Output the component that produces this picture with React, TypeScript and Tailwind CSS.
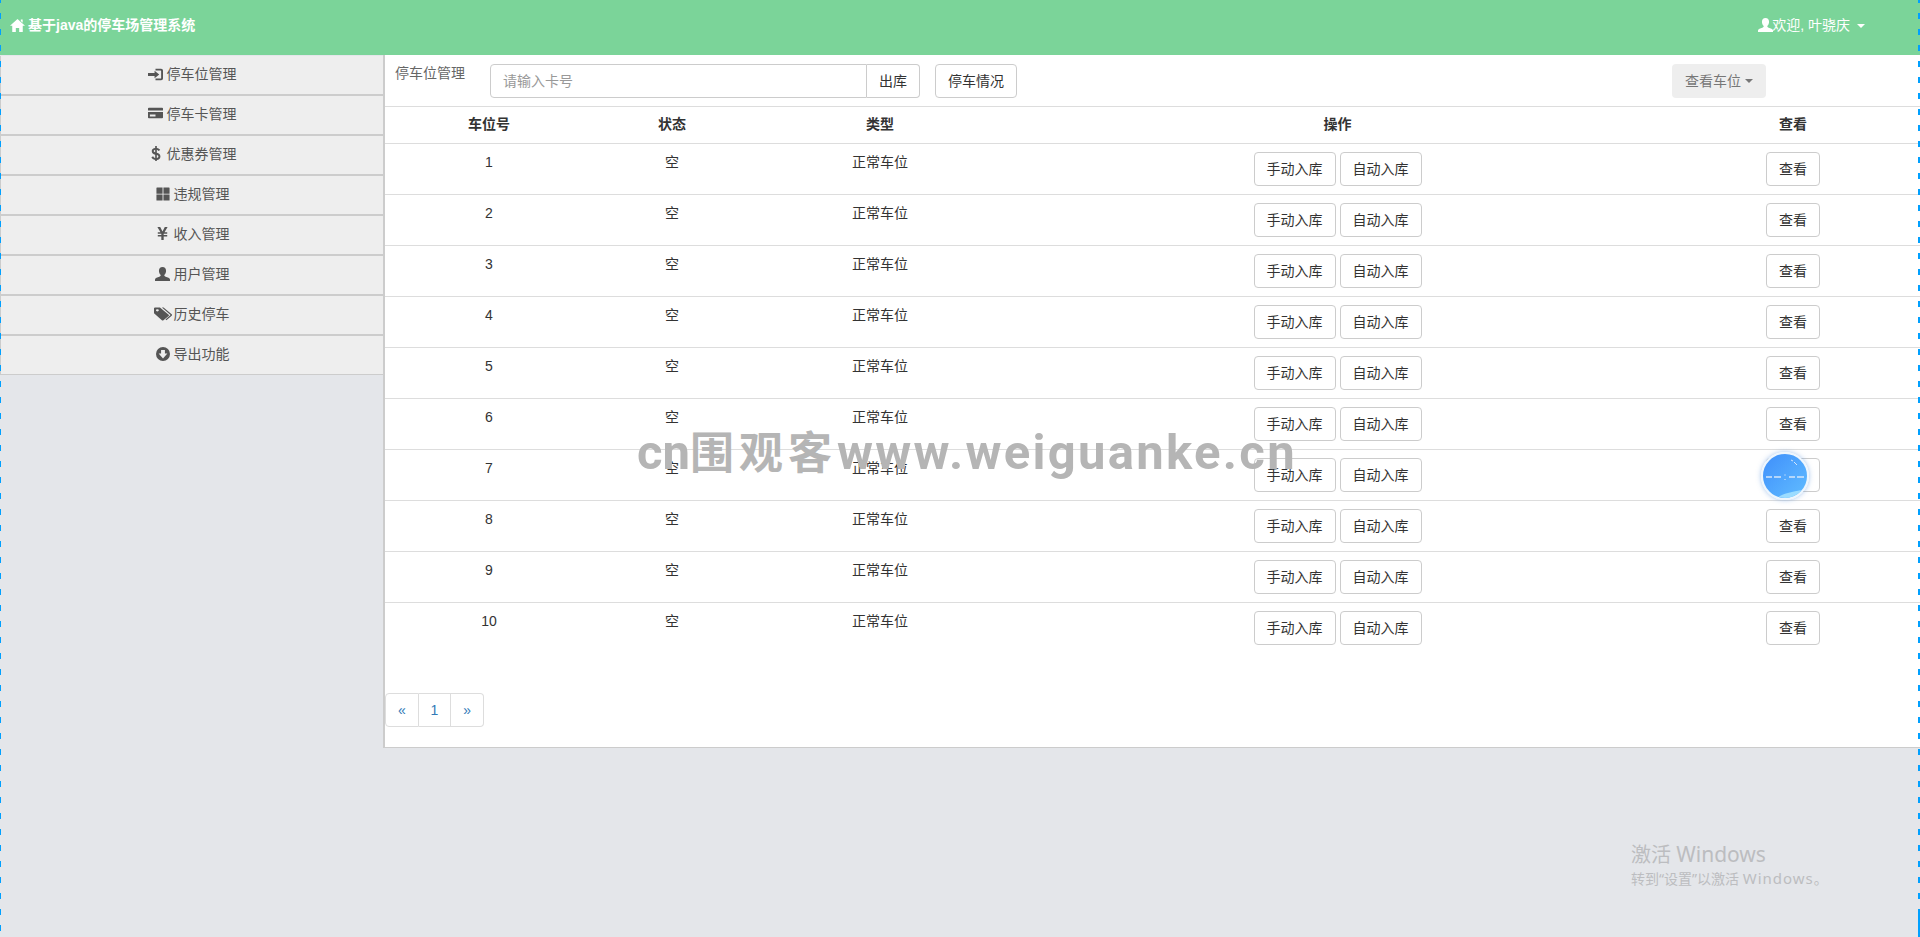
const font = '[font-family:"Liberation_Sans","Noto_Sans_CJK_SC",sans-serif]';

type P = { className?: string };
const I = ({ className, d, box = '0 0 16 16' }: P & { d: string; box?: string }) => (
  <svg viewBox={box} preserveAspectRatio="none" className={`${className} shrink-0`} fill="currentColor" fillRule="evenodd"><path d={d} /></svg>
);
const Home = (p: P) => <I {...p} d="M8 1 16 8.200h-2.400V15H9.800v-4.400H6.200V15H2.400V8.200H0L8 1ZM11.500 1.500h2v3.500l-2-1.800V1.500Z" />;
const LogIn = (p: P) => <I {...p} d="M8 1h6a2 2 0 0 1 2 2v10a2 2 0 0 1-2 2H8v-2h5.300a.7.7 0 0 0 .7-.7V3.700a.7.7 0 0 0-.7-.7H8V1ZM7 3.500 12 8l-5 4.500V9.800H0V6.200h7V3.500Z" />;
const Card = (p: P) => <I {...p} d="M1 1h14a1 1 0 0 1 1 1v2.500H0V2a1 1 0 0 1 1-1ZM0 6.500h16V14a1 1 0 0 1-1 1H1a1 1 0 0 1-1-1V6.500Zm2 3.500v2.500h6V10H2Z" />;
const Usd = (p: P) => <I {...p} box="2 0 12 16" d="M7 0h2v2c2 .2 3.400 1 4 2.200l-2 1.200C10.500 4.600 9.800 4.200 9 4v3.200c2.500.6 4.300 1.500 4.300 3.900 0 2.200-1.800 3.500-4.300 3.700V16H7v-1.200c-2.300-.2-3.800-1.200-4.500-2.800l2.100-1.100c.5 1 1.300 1.600 2.400 1.800V9.200C4.600 8.600 2.900 7.700 2.900 5.300 2.900 3.300 4.600 2.100 7 2V0Zm0 4c-1 .1-1.700.6-1.700 1.300 0 .7.600 1 1.700 1.300V4Zm2 5.600v3.100c1.100-.1 1.900-.6 1.900-1.500 0-.8-.7-1.200-1.900-1.600Z" />;
const Th = (p: P) => <I {...p} d="M1 .5h6.300a.4.4 0 0 1 .2.200v7H.500V1a.5.5 0 0 1 .5-.5Zm7.500 0H15a.5.5 0 0 1 .5.500v6.700h-7V.5ZM.5 8.700h7v6.800H1a.5.5 0 0 1-.5-.5V8.700Zm8 0h7V15a.5.5 0 0 1-.5.500H8.500V8.700Z" />;
const Yen = (p: P) => <I {...p} box="1 0 14 16" d="M1.500 0h3.600L8 5.600 10.900 0h3.600l-3.900 6.500H14v1.800H9.500v1.500H14v1.800H9.500V16h-3v-4.400H2V9.800h4.500V8.300H2V6.500h3.400L1.500 0Z" />;
const User = (p: P) => <I {...p} d="M8 0c2.400 0 3.800 1.800 3.800 4.200 0 2-.8 4-1.900 4.900 0 1 .3 1.400 1.400 1.900 2 .8 4.700 1.500 4.700 3.200V16H0v-1.800c0-1.700 2.700-2.400 4.700-3.200 1.100-.5 1.400-.9 1.400-1.900C5 8.200 4.200 6.200 4.200 4.200 4.200 1.800 5.600 0 8 0Z" />;
const Tags = (p: P) => <I {...p} d="M0 1.500A1 1 0 0 1 1 .5h4.300L13 8.800a1 1 0 0 1 0 1.400l-4.600 5a1 1 0 0 1-1.400 0L0 7V1.500Zm3 1a1.300 1.300 0 1 0 0 2.600 1.300 1.300 0 0 0 0-2.600ZM7 .5h1.500l7.200 7.700a1.200 1.200 0 0 1 0 1.700L11 15l-.8-.8 4.300-4.700a.5.500 0 0 0 0-.7L7 .5Z" />;
const Down = (p: P) => <I {...p} d="M8 0a8 8 0 1 1 0 16A8 8 0 0 1 8 0ZM5.800 3.500v4H3L8 13l5-5.500h-2.800v-4H5.800Z" />;

const menu = [
  { Icon: LogIn, label: '停车位管理', cls: 'w-[15px] h-[13px]' },
  { Icon: Card, label: '停车卡管理', cls: 'w-[15px] h-[12px] mb-[3px]' },
  { Icon: Usd, label: '优惠券管理', cls: 'w-[10px] h-[15px] mb-[2px]' },
  { Icon: Th, label: '违规管理', cls: 'w-[14px] h-[14px]' },
  { Icon: Yen, label: '收入管理', cls: 'w-[11px] h-[13px] mb-[2px]' },
  { Icon: User, label: '用户管理', cls: 'w-[15px] h-[14px]' },
  { Icon: Tags, label: '历史停车', cls: 'w-[18px] h-[14px]' },
  { Icon: Down, label: '导出功能', cls: 'w-[14px] h-[14px]' },
];

const btn = 'inline-flex items-center justify-center h-[34px] px-[12px] border border-[#ccc] rounded-[4px] bg-white text-[14px] text-[#333]';

export default function App() {
  return (
    <div className={`${font} relative h-[937px] overflow-hidden bg-[#e4e6ea] text-[14px] text-[#333]`}>
      <header className="flex items-center justify-between h-[55px] pb-[5px] bg-[#7bd499] text-white pl-[10px] pr-[55px]">
        <div className="flex items-center gap-[3px] font-bold">
          <Home className="w-[15px] h-[15px]" />
          <span>基于java的停车场管理系统</span>
        </div>
        <div className="flex items-center">
          <User className="w-[15px] h-[14px] mr-[-1px]" />
          <span>欢迎, 叶骁庆</span>
          <span className="ml-[7px] mt-[1px] border-x-[4px] border-x-transparent border-t-[4px] border-t-white" />
        </div>
      </header>
      <div className="flex items-start">
        <nav className="w-[385px] shrink-0 border-r-2 border-r-[#ccc] h-[693px] pt-[1px]">
          {menu.map(({ Icon, label, cls }, i) => (
            <div
              key={label}
              className={`flex items-start justify-center gap-[3px] pt-[8px] bg-[#eee] text-[#555] border-l border-l-[#ccc] border-b-[#ccc] ${i === 7 ? 'h-[39px] border-b' : 'h-[40px] border-b-2'}`}
            >
              <span className="flex h-[20px] w-[16px] items-center justify-center"><Icon className={cls} /></span>
              <span className="leading-[20px]">{label}</span>
            </div>
          ))}
        </nav>
        <main className="flex-1 h-[693px] bg-white border-b border-b-[#ccc]">
          <div className="flex items-start h-[52px] pt-[9px] border-b border-b-[#ddd]">
            <span className="ml-[10px] leading-[20px] text-[#666] mt-[-1px]">停车位管理</span>
            <div className="flex ml-[25px] w-[430px] h-[34px]">
              <div className="flex-1 flex items-center px-[12px] border border-[#ccc] rounded-l-[4px] text-[#999]">请输入卡号</div>
              <div className="flex items-center px-[12px] border border-l-0 border-[#ccc] rounded-r-[4px] text-[#333]">出库</div>
            </div>
            <div className={`${btn} ml-[15px]`}>停车情况</div>
            <div className="flex items-center h-[34px] ml-[655px] pl-[13px] pr-[13px] rounded-[4px] bg-[#eee] text-[#777]">
              查看车位
              <span className="ml-[4px] border-x-[4px] border-x-transparent border-t-[4px] border-t-[#777]" />
            </div>
          </div>
          <table className="w-full table-fixed border-collapse">
            <colgroup>
              <col className="w-[208px]" />
              <col className="w-[158px]" />
              <col className="w-[258px]" />
              <col className="w-[657px]" />
              <col className="w-[254px]" />
            </colgroup>
            <thead>
              <tr className="h-[36px] border-b border-b-[#ddd]">
                {['车位号', '状态', '类型', '操作', '查看'].map((h) => (
                  <th key={h} className="text-center font-bold align-middle">{h}</th>
                ))}
              </tr>
            </thead>
            <tbody>
              {Array.from({ length: 10 }, (_, i) => (
                <tr key={i} className={`h-[51px] ${i < 9 ? 'border-b border-b-[#ddd]' : ''}`}>
                  <td className="text-center align-top pt-[8px] leading-[20px]">{i + 1}</td>
                  <td className="text-center align-top pt-[8px] leading-[20px]">空</td>
                  <td className="text-center align-top pt-[8px] leading-[20px]">正常车位</td>
                  <td className="align-top pt-[8px]">
                    <div className="flex justify-center gap-[4px]">
                      <div className={`${btn} pt-[1px]`}>手动入库</div>
                      <div className={`${btn} pt-[1px]`}>自动入库</div>
                    </div>
                  </td>
                  <td className="align-top pt-[8px]">
                    <div className="flex justify-center"><div className={`${btn} pt-[1px]`}>查看</div></div>
                  </td>
                </tr>
              ))}
            </tbody>
          </table>
          <div className="flex mt-[40px] w-[99px] h-[34px] text-[#337ab7]">
            <div className="flex-1 flex items-center justify-center border border-[#ddd] rounded-l-[4px]">«</div>
            <div className="flex-1 flex items-center justify-center border-y border-r border-[#ddd]">1</div>
            <div className="flex-1 flex items-center justify-center border-y border-r border-[#ddd] rounded-r-[4px]">»</div>
          </div>
        </main>
      </div>

      <div className="absolute left-0 top-[-3px] bottom-0 w-[1px] bg-[repeating-linear-gradient(to_bottom,#00a0ff_0,#00a0ff_6px,transparent_6px,transparent_16px)]" />
      <div className="absolute right-0 top-[-3px] bottom-0 w-[2px] bg-[repeating-linear-gradient(to_bottom,#00a0ff_0,#00a0ff_6px,transparent_6px,transparent_16px)]" />
      <div className="absolute right-0 top-[909px] bottom-0 w-[2px] bg-[#00a0ff]" />

      <div className="absolute left-[637px] top-[415px] flex items-baseline h-[70px] leading-[70px] font-bold text-[#b5b5b5] whitespace-nowrap">
        <span className="text-[49px] [font-family:Roboto,sans-serif]">cn</span>
        <span className="text-[44px] tracking-[5px] [font-family:'Noto_Sans_CJK_SC',sans-serif]">围观客</span>
        <span className="text-[49px] tracking-[2.300px] [font-family:Roboto,sans-serif]">www.weiguanke.cn</span>
      </div>

      <div className="absolute left-[1761px] top-[452px] w-[48px] h-[48px] rounded-full border-[2px] border-[#eef6fd] shadow-[0_0_5px_rgba(80,140,220,0.5)] overflow-hidden bg-gradient-to-br from-[#3f8ffb] to-[#62bcff]">
        <svg viewBox="0 0 44 44" className="w-full h-full">
          <path d="M3 23h6M11 23h7M26 23h6M34 23h7" stroke="#d5e6fa" strokeWidth="1.500" />
          <path d="M22 20.500v1M22 25v1" stroke="#d5e6fa" strokeWidth="1.200" />
          <path d="M28 6l2 1M31 8l3 3" stroke="#d5e6fa" strokeWidth="1" />
          <path d="M14 44C20 39 30 38 38 36L34 44Z" fill="#9bdcff" />
        </svg>
      </div>

      <div className="absolute left-[1631px] top-[841px] text-[#bcbdc0] whitespace-nowrap [font-family:'Noto_Sans','Noto_Sans_CJK_SC',sans-serif]">
        <div className="text-[20px] leading-[26px]">激活 <span className="text-[21px]">Windows</span></div>
        <div className="text-[14px] leading-[20px]">转到“设置”以激活 <span className="text-[15px] tracking-[1px]">Windows</span>。</div>
      </div>
    </div>
  );
}
